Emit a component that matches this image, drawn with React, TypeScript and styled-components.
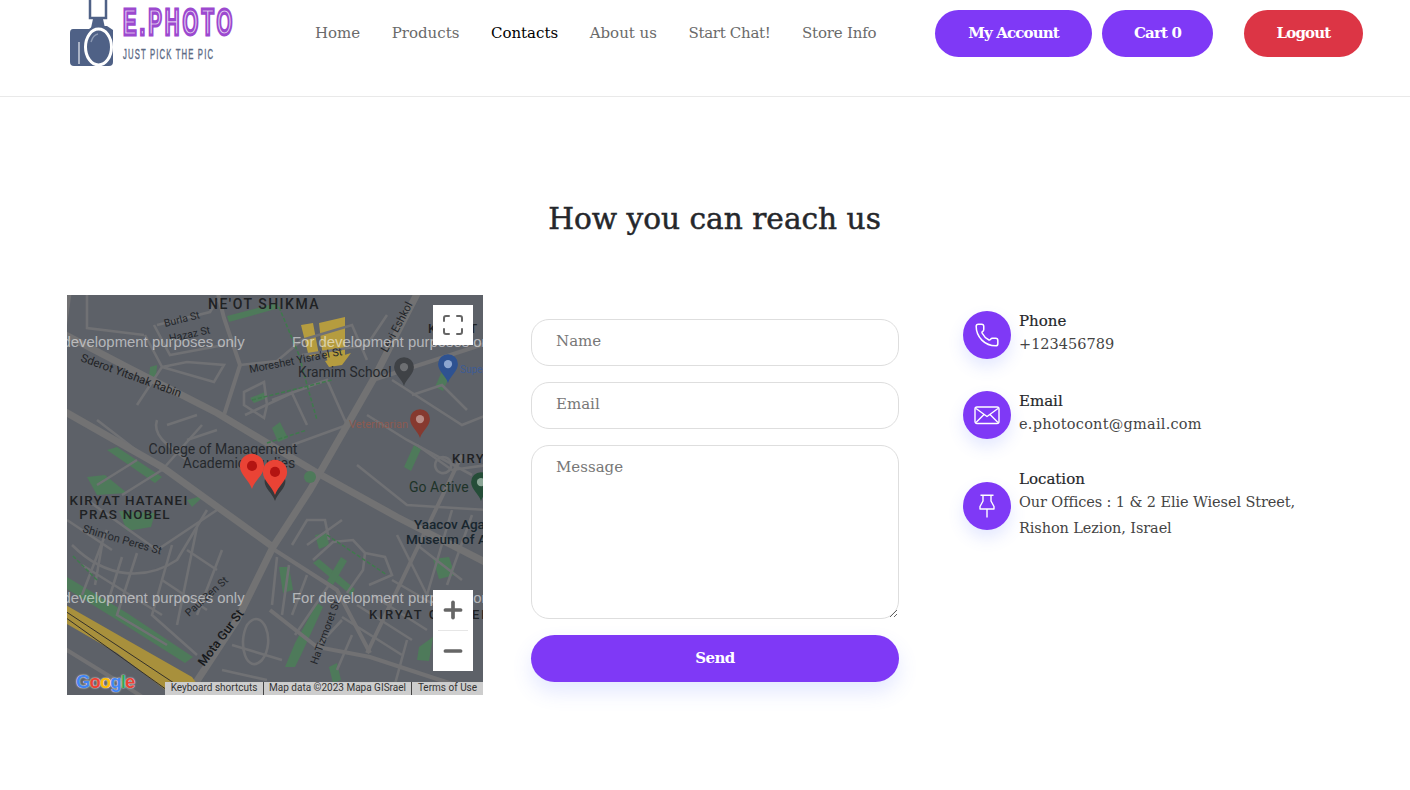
import styled, { createGlobalStyle } from "styled-components";
import { Phone, Maximize, Plus, Minus } from "lucide-react";

const serif = `"DejaVu Serif", "Liberation Serif", serif`;

const GlobalStyle = createGlobalStyle`
    html, body {
        margin: 0;
        padding: 0;
        background: #fff;
        font-family: ${serif};
        overflow: hidden;
    }
    * {
        box-sizing: border-box;
    }
`;

const Page = styled.div`
    width: 1410px;
    height: 790px;
    overflow: hidden;
`;

const Header = styled.header`
    display: flex;
    align-items: flex-start;
    height: 97px;
    padding: 10px 47px 0 67px;
    border-bottom: 1px solid #e9e9e9;
`;

const LogoBox = styled.div`
    width: 248px;
    height: 70px;
    margin-top: -10px;
    flex: none;
`;

const Nav = styled.nav`
    display: flex;
    align-items: center;
    height: 45px;
    gap: 31.5px;
`;

const NavLink = styled.a<{ $active?: boolean; $ls?: number }>`
    font-size: 15px;
    letter-spacing: ${(p) => p.$ls || 0}px;
    color: ${(p) => (p.$active ? "#000" : "#6a6a6a")};
    white-space: nowrap;
`;

const Actions = styled.div`
    display: flex;
    gap: 10px;
    margin-left: auto;
`;

const PillButton = styled.button<{ $danger?: boolean; $w: number; $gapLeft?: number }>`
    width: ${(p) => p.$w}px;
    height: 47px;
    margin-left: ${(p) => p.$gapLeft || 0}px;
    padding: 0 0 2px;
    border: 0;
    border-radius: 24px;
    background: ${(p) => (p.$danger ? "#dc3545" : "#7f39f6")};
    color: #fff;
    font-family: ${serif};
    font-size: 15px;
    font-weight: 700;
    letter-spacing: -0.85px;
`;

const Title = styled.h2`
    margin: 0;
    padding: 100px 0 0 19px;
    height: 198px;
    font-size: 29.6px;
    line-height: 44px;
    font-weight: 400;
    -webkit-text-stroke: 0.5px #25272b;
    text-align: center;
    color: #25272b;
`;

const Columns = styled.section`
    display: grid;
    grid-template-columns: 416px 368px 1fr;
    column-gap: 48px;
    padding-left: 67px;
`;

const MapFrame = styled.div`
    position: relative;
    width: 416px;
    height: 400px;
    overflow: hidden;
    background: #5d6168;
`;

const MapDrawing = styled.svg`
    display: block;
    width: 416px;
    height: 400px;
`;

const MapControl = styled.button`
    position: absolute;
    right: 10px;
    top: 10px;
    width: 40px;
    height: 40px;
    padding: 0;
    border: 0;
    background: #fff;
    color: #666;
    display: flex;
    align-items: center;
    justify-content: center;
`;

const ZoomBox = styled.div`
    position: absolute;
    right: 10px;
    bottom: 24px;
    width: 40px;
    height: 81px;
    background: #fff;
    display: flex;
    flex-direction: column;
    align-items: center;
    justify-content: space-between;
    color: #666;
`;

const ZoomKey = styled.span`
    height: 40px;
    display: flex;
    align-items: center;
    justify-content: center;
`;

const ZoomRule = styled.span`
    width: 30px;
    height: 1px;
    background: #e6e6e6;
`;

const GoogleMark = styled.div`
    position: absolute;
    left: 9px;
    bottom: 1px;
    font-family: "Liberation Sans", sans-serif;
    font-size: 18.5px;
    font-weight: 700;
    letter-spacing: -0.9px;
    line-height: 24px;
    text-shadow: 0 0 2px #ddd, 0 0 1px #eee;
`;

const GoogleLetter = styled.span<{ $c: string }>`
    color: ${(p) => p.$c};
`;

const MapFooter = styled.div`
    position: absolute;
    right: 0;
    bottom: 0;
    height: 13px;
    width: 318px;
    display: flex;
    background: #cdcdcd;
    font-family: Roboto, sans-serif;
    font-size: 10px;
    line-height: 12px;
    color: #333;
    white-space: nowrap;
`;

const FooterItem = styled.span<{ $w: number }>`
    width: ${(p) => p.$w}px;
    text-align: center;
    & + & {
        border-left: 1px solid #444;
    }
`;

const ContactForm = styled.form`
    display: flex;
    flex-direction: column;
    gap: 16px;
    padding-top: 24px;
`;

const Field = styled.input`
    width: 100%;
    height: 47px;
    padding: 0 24px 3px;
    border: 1px solid #dedede;
    border-radius: 18px;
    background: #fff;
    font-family: ${serif};
    font-size: 15px;
    outline: none;
    &::placeholder {
        color: #777;
        opacity: 1;
    }
`;

const MessageField = styled.textarea`
    display: block;
    width: 100%;
    height: 174px;
    padding: 12px 24px;
    border: 1px solid #dedede;
    border-radius: 18px;
    background: #fff;
    font-family: ${serif};
    font-size: 15px;
    outline: none;
    &::placeholder {
        color: #777;
        opacity: 1;
    }
`;

const SendButton = styled.button`
    width: 100%;
    height: 47px;
    padding: 0 0 2px;
    border: 0;
    border-radius: 24px;
    background: #7f39f6;
    color: #fff;
    font-family: ${serif};
    font-size: 15px;
    font-weight: 700;
    letter-spacing: -0.6px;
    box-shadow: 0 10px 20px rgba(90, 110, 255, 0.16);
`;

const InfoList = styled.div`
    display: flex;
    flex-direction: column;
    gap: 32px;
    padding: 16px 0 0 16px;
`;

const InfoItem = styled.div<{ $pull?: boolean }>`
    display: flex;
    align-items: center;
    gap: 8px;
    margin-top: ${(p) => (p.$pull ? "-2px" : "0")};
`;

const InfoIcon = styled.div`
    width: 48px;
    height: 48px;
    flex: none;
    border-radius: 50%;
    background: #7f39f6;
    color: #fff;
    display: flex;
    align-items: center;
    justify-content: center;
    box-shadow: 0 8px 16px rgba(90, 110, 255, 0.16);
`;

const InfoText = styled.div`
    padding-bottom: 2px;
`;

const InfoTitle = styled.div`
    font-size: 15px;
    line-height: 20px;
    -webkit-text-stroke: 0.2px #25272b;
    color: #25272b;
`;

const InfoBody = styled.div<{ $ls?: number }>`
    font-size: 14.5px;
    line-height: 26px;
    letter-spacing: ${(p) => p.$ls || 0}px;
    color: #444;
`;

const majorRoads = [
    "M-5 38 L60 72 L150 118 L247 176 L330 222 L420 268",
    "M-5 115 L95 172 L206 252",
    "M126 392 L170 325 L206 252 L243 195 L306 85 L352 -5",
];

const sideRoads = [
    "M157 120 L173 70 L157 23 L150 -5",
    "M-5 352 L60 392 L80 405",
    "M203 252 L270 295 L303 358",
    "M203 315 L250 352 L303 362 L373 385 L420 400",
    "M300 358 L335 285 L370 212 L395 160",
    "M306 85 L420 48",
    "M3 -5 L-2 30",
];

const minorRoads = [
    "M20 -5 L20 33 L77 40",
    "M87 30 L103 60 L157 50",
    "M90 30 L143 17 L150 5",
    "M95 72 L147 87 L157 70 L120 67 L95 72",
    "M78 40 L95 72 L70 110",
    "M177 97 L197 87 L200 110 L197 123 L177 110Z",
    "M173 70 L210 66 L235 45 L285 30 L300 65",
    "M205 105 L260 85 L280 130 L225 150",
    "M235 60 L300 50 L320 20",
    "M178 120 L225 98 L240 130",
    "M300 120 L340 145 L405 180",
    "M325 85 L395 130 L420 120",
    "M350 150 L385 175 L420 170",
    "M290 170 L340 210 L420 215",
    "M370 165 A8 8 0 1 0 371 164",
    "M345 100 L375 90 L400 115",
    "M30 125 L95 175 L135 130",
    "M90 125 C85 140 100 150 120 165",
    "M100 130 L130 120 M120 145 L150 135",
    "M20 205 L90 255 L150 215",
    "M5 250 C40 285 80 285 110 265 L140 215",
    "M40 235 L15 300",
    "M70 258 L50 320 L100 350",
    "M105 250 L85 320 L130 360",
    "M130 232 L110 330",
    "M155 255 L130 320",
    "M0 225 L45 255 M15 270 L95 320 M35 250 L28 290 M55 262 L40 310",
    "M120 255 L150 275 M110 295 L140 315 M95 285 L125 305",
    "M180 330 C195 310 210 345 195 365 C180 380 170 350 180 330Z",
    "M165 350 L215 365 M155 375 L200 385",
    "M246 265 L266 247 L286 245 L298 258 L296 275 L280 298",
    "M225 250 L240 225 L258 225 L262 245",
    "M298 258 L318 262 L325 280 L302 290",
    "M210 262 L205 310 M222 270 L215 320 M240 280 L225 320",
    "M228 340 L262 290 M250 352 L275 325",
    "M275 322 L335 360 M290 310 L345 345 M305 300 L360 335",
    "M285 340 L270 375 M340 345 L325 400",
    "M325 285 L385 320 M350 250 L395 285",
    "M240 250 L275 225 M330 240 L360 300",
    "M385 215 L360 300 M405 220 L380 290",
    "M30 190 L70 165 M55 200 L95 175",
    "M5 320 L35 345 L100 392",
];

const parks = [
    "M380 65 L388 68 L376 96 L368 92Z",
    "M83 72 L90 70 L89 84 L82 84Z",
    "M183 103 L198 97 L200 103 L187 108Z",
    "M205 133 L213 127 L221 143 L211 147Z",
    "M347 150 L354 154 L344 176 L337 172Z",
    "M40 155 L50 152 L95 182 L88 188Z",
    "M20 182 L38 180 L60 198 L30 200Z",
    "M52 216 L88 218 L84 232 L60 236Z",
    "M212 272 L222 272 L226 295 L216 298Z",
    "M248 240 L260 238 L262 250 L252 254Z",
    "M218 372 L228 348 L250 308 L256 312 L234 360 L228 372Z",
    "M246 268 L252 264 L288 294 L284 300Z",
    "M274 262 L280 266 L266 290 L260 286Z",
    "M366 264 L382 262 L388 280 L372 284Z",
    "M352 352 L366 342 L362 366 L350 365Z",
    "M262 372 L270 368 L274 385 L266 388Z",
    "M0 282 L60 318 L126 362 L118 368 L55 328 L0 294Z",
    "M145 388 L165 392 L156 402Z",
    "M120 205 L138 200 L125 212Z",
    "M160 21 L210 8 L212 13 L162 27Z",
];

const greenPaths = [
    "M212 12 L232 60 L240 90 L250 125",
    "M185 105 L265 85",
    "M200 148 L240 135",
    "M30 285 L5 260",
    "M260 240 L320 280",
];

const labels: {
    t: string; x: number; y: number; s: number; r?: number; c?: string; w?: number; ls?: number; a?: "middle" | "end";
}[] = [
    { t: "NE'OT SHIKMA", x: 197, y: 14, s: 14, c: "#1f2224", w: 500, ls: 1.5, a: "middle" },
    { t: "Burla St", x: 98, y: 32, s: 10.5, r: -14, c: "#23262a" },
    { t: "Hazaz St", x: 103, y: 47, s: 10.5, r: -12, c: "#23262a" },
    { t: "Levi Eshkol", x: 320, y: 58, s: 11, r: -62, c: "#23262a" },
    { t: "Moreshet Yisra'el St", x: 183, y: 78, s: 10.8, r: -11, c: "#23262a" },
    { t: "Kramim School", x: 231, y: 82, s: 13.8, c: "#26292d" },
    { t: "Sderot Yitshak Rabin", x: 13, y: 66, s: 11.5, r: 20, c: "#1f2224" },
    { t: "Veterinarian", x: 341, y: 133, s: 11, c: "#8c5a50", a: "end" },
    { t: "College of Management", x: 156, y: 159, s: 14, c: "#26292d", a: "middle" },
    { t: "Academic Studies", x: 172, y: 173, s: 14, c: "#26292d", a: "middle" },
    { t: "KIRYAT", x: 385, y: 168, s: 13, c: "#1f2224", w: 500, ls: 1.3 },
    { t: "KIRYAT", x: 361, y: 38, s: 13, c: "#1f2224", w: 500, ls: 1.3 },
    { t: "Go Active", x: 342, y: 197, s: 14, c: "#1e3328" },
    { t: "KIRYAT HATANEI", x: 62, y: 210, s: 13.4, c: "#1f2224", w: 500, ls: 1.2, a: "middle" },
    { t: "PRAS NOBEL", x: 58, y: 224, s: 13.4, c: "#1f2224", w: 500, ls: 1.2, a: "middle" },
    { t: "Yaacov Agam", x: 347, y: 234, s: 13.5, c: "#18262e", w: 500 },
    { t: "Museum of Art", x: 339, y: 249, s: 13.5, c: "#18262e", w: 500 },
    { t: "Shim'on Peres St", x: 15, y: 237, s: 11, r: 16, c: "#23262a" },
    { t: "Paul Ben St", x: 122, y: 322, s: 10.5, r: -42, c: "#23262a" },
    { t: "Mota Gur St", x: 137, y: 372, s: 12.5, r: -53, c: "#16181a", w: 500 },
    { t: "HaTizmoret St", x: 250, y: 370, s: 10.5, r: -70, c: "#23262a" },
    { t: "KIRYAT GIMMEL", x: 302, y: 324, s: 13, c: "#1f2224", w: 500, ls: 2 },
    { t: "Supermarket", x: 393, y: 78, s: 10, c: "#3d5c94" },
];

function MapPin({ x, y, color, scale = 1, dot = "#fff" }: { x: number; y: number; color: string; scale?: number; dot?: string }) {
    return (
        <g transform={`translate(${x} ${y}) scale(${scale})`}>
            <path d="M0 0 C-2.5 -8 -11 -13 -11 -21 A11 11 0 1 1 11 -21 C11 -13 2.5 -8 0 0Z" fill={color} />
            <circle cx="0" cy="-21" r="4.6" fill={dot} />
        </g>
    );
}

function MapArt() {
    return (
        <MapDrawing viewBox="0 0 416 400">
            <rect width="416" height="400" fill="#5d6168" />
            {parks.map((d) => (
                <path key={d} d={d} fill="#4e7a5a" />
            ))}
            <path d="M234 30 L246 28 L252 60 L242 62Z M252 28 L278 22 L278 60 L262 68 L255 55Z M258 66 L284 58 L275 70 L262 72Z" fill="#b59c3f" />
            {minorRoads.map((d) => (
                <path key={d} d={d} fill="none" stroke="#707174" strokeWidth="2.6" />
            ))}
            {sideRoads.map((d) => (
                <path key={d} d={d} fill="none" stroke="#717173" strokeWidth="4" />
            ))}
            {majorRoads.map((d) => (
                <path key={d} d={d} fill="none" stroke="#727273" strokeWidth="7" />
            ))}
            {greenPaths.map((d) => (
                <path key={d} d={d} fill="none" stroke="#3f7a4c" strokeWidth="1.5" strokeDasharray="4 2" />
            ))}
            <path d="M-5 308 L60 345 L125 382 L138 400 L105 400 L50 358 L-5 326Z" fill="#a8903c" />
            <path d="M-5 314 L110 390 M-5 320 L100 395" stroke="#33302a" strokeWidth="1" fill="none" />
            <circle cx="243" cy="182" r="6" fill="#4e7a5a" />
            {labels.map((l) => (
                <text
                    key={l.t + l.x}
                    x={l.x}
                    y={l.y}
                    fontFamily="Roboto, sans-serif"
                    fontSize={l.s}
                    fontWeight={l.w || 400}
                    fill={l.c}
                    letterSpacing={l.ls}
                    textAnchor={l.a}
                    transform={l.r ? `rotate(${l.r} ${l.x} ${l.y})` : undefined}
                >
                    {l.t}
                </text>
            ))}
            <MapPin x={337} y={91} color="#3f4246" scale={0.9} dot="#6d6f72" />
            <MapPin x={381} y={88} color="#2e5291" scale={0.9} dot="#8da6d0" />
            <MapPin x={353} y={143} color="#86392f" scale={0.9} dot="#b98b85" />
            <MapPin x={414} y={206} color="#254d38" scale={0.9} dot="#8aa596" />
            <MapPin x={208} y={206} color="#37393c" scale={0.95} dot="#37393c" />
            <MapPin x={185} y={194} color="#ea4335" scale={1.1} dot="#b31412" />
            <MapPin x={208} y={200} color="#ea4335" scale={1.1} dot="#b31412" />
            {[47, 303].map((y) =>
                [-31, 225].map((x) => (
                    <text key={`${x}-${y}`} x={x} y={y + 5} fontFamily="Liberation Sans, sans-serif" fontSize="14.9" fill="#fff" fillOpacity="0.55">
                        For development purposes only
                    </text>
                ))
            )}
        </MapDrawing>
    );
}

function Logo() {
    return (
        <svg width="248" height="70" viewBox="0 0 248 70">
            <rect x="23" y="-2" width="16" height="20" fill="#fff" stroke="#4f6186" strokeWidth="2.5" />
            <path d="M26 19 L36 19 L38 28 L24 28Z" fill="#4f6186" />
            <path d="M6 29 L22 29 L26 26 L40 26 L46 30 L46 62 Q46 66 42 66 L7 66 Q3 66 3 62 L3 33 Q3 29 6 29Z" fill="#4f6186" />
            <rect x="11" y="42" width="2" height="22" fill="#aab3c6" />
            <ellipse cx="31.5" cy="47" rx="13" ry="18" fill="#4f6186" stroke="#fff" strokeWidth="3" />
            <path d="M24 42 Q26 35 31 34" fill="none" stroke="#8c99b3" strokeWidth="1.4" />
            <text transform="translate(56 35) scale(0.55 1)" fontFamily="Liberation Sans, sans-serif" fontSize="37" fontWeight="700" fill="#e6d3f3" stroke="#9c49cf" strokeWidth="3.2" letterSpacing="5.5">
                E.PHOTO
            </text>
            <text transform="translate(56 59) scale(0.55 1)" fontFamily="Liberation Sans, sans-serif" fontSize="14" fill="#5c6a84" stroke="#5c6a84" strokeWidth="0.4" letterSpacing="2.1">
                JUST PICK THE PIC
            </text>
        </svg>
    );
}

function MailIcon() {
    return (
        <svg width="26" height="20" viewBox="0 0 26 20" fill="none" stroke="currentColor" strokeWidth="1.4" strokeLinejoin="round">
            <rect x="1" y="2" width="24" height="16.5" rx="2" />
            <path d="M2 3.5 L13 11.5 L24 3.5 M2 17.5 L10 9.5 M24 17.5 L16 9.5" />
        </svg>
    );
}

function PushPin() {
    return (
        <svg width="18" height="24" viewBox="0 0 18 24" fill="none" stroke="currentColor" strokeWidth="1.4" strokeLinejoin="round">
            <path d="M2.5 1.2 H15.5 M5 1.2 V7 L2 12.5 V15 H16 V12.5 L13 7 V1.2 M9 15 V23.5" />
        </svg>
    );
}

export default function App() {
    return (
        <Page>
            <GlobalStyle />
            <Header>
                <LogoBox>
                    <Logo />
                </LogoBox>
                <Nav>
                    <NavLink>Home</NavLink>
                    <NavLink>Products</NavLink>
                    <NavLink $active>Contacts</NavLink>
                    <NavLink>About us</NavLink>
                    <NavLink $ls={-0.3}>Start Chat!</NavLink>
                    <NavLink $ls={-0.2}>Store Info</NavLink>
                </Nav>
                <Actions>
                    <PillButton $w={157}>My Account</PillButton>
                    <PillButton $w={111}>Cart 0</PillButton>
                    <PillButton $w={119} $danger $gapLeft={21}>Logout</PillButton>
                </Actions>
            </Header>
            <Title>How you can reach us</Title>
            <Columns>
                <MapFrame>
                    <MapArt />
                    <MapControl type="button">
                        <Maximize size={24} strokeWidth={2} />
                    </MapControl>
                    <ZoomBox>
                        <ZoomKey><Plus size={26} strokeWidth={3.4} /></ZoomKey>
                        <ZoomRule />
                        <ZoomKey><Minus size={26} strokeWidth={3.4} /></ZoomKey>
                    </ZoomBox>
                    <GoogleMark>
                        <GoogleLetter $c="#4285f4">G</GoogleLetter>
                        <GoogleLetter $c="#ea4335">o</GoogleLetter>
                        <GoogleLetter $c="#fbbc05">o</GoogleLetter>
                        <GoogleLetter $c="#4285f4">g</GoogleLetter>
                        <GoogleLetter $c="#34a853">l</GoogleLetter>
                        <GoogleLetter $c="#ea4335">e</GoogleLetter>
                    </GoogleMark>
                    <MapFooter>
                        <FooterItem $w={98}>Keyboard shortcuts</FooterItem>
                        <FooterItem $w={148}>Map data ©2023 Mapa GISrael</FooterItem>
                        <FooterItem $w={72}>Terms of Use</FooterItem>
                    </MapFooter>
                </MapFrame>
                <ContactForm>
                    <Field placeholder="Name" />
                    <Field placeholder="Email" />
                    <MessageField placeholder="Message" />
                    <SendButton type="button">Send</SendButton>
                </ContactForm>
                <InfoList>
                    <InfoItem>
                        <InfoIcon><Phone size={26} strokeWidth={1.4} /></InfoIcon>
                        <InfoText>
                            <InfoTitle>Phone</InfoTitle>
                            <InfoBody>+123456789</InfoBody>
                        </InfoText>
                    </InfoItem>
                    <InfoItem>
                        <InfoIcon><MailIcon /></InfoIcon>
                        <InfoText>
                            <InfoTitle>Email</InfoTitle>
                            <InfoBody $ls={0.24}>e.photocont@gmail.com</InfoBody>
                        </InfoText>
                    </InfoItem>
                    <InfoItem $pull>
                        <InfoIcon><PushPin /></InfoIcon>
                        <InfoText>
                            <InfoTitle>Location</InfoTitle>
                            <InfoBody $ls={-0.1}>
                                Our Offices : 1 &amp; 2 Elie Wiesel Street,
                                <br />
                                Rishon Lezion, Israel
                            </InfoBody>
                        </InfoText>
                    </InfoItem>
                </InfoList>
            </Columns>
        </Page>
    );
}
